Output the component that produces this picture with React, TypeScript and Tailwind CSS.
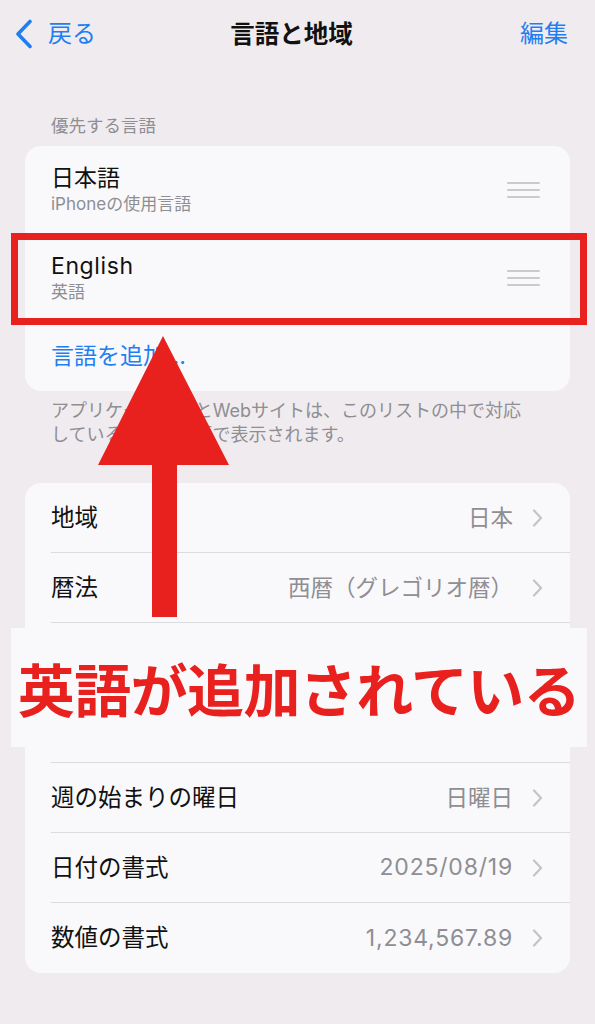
import React from "react";

const Chevron = () => (
  <svg width="11" height="18" viewBox="0 0 11 18" className="shrink-0">
    <path d="M2 1.5 L9 9 L2 16.5" fill="none" stroke="#c4c4c8" strokeWidth="2.2" strokeLinecap="round" strokeLinejoin="round" />
  </svg>
);

const Handle = () => (
  <svg width="33" height="16" viewBox="0 0 33 16" className="shrink-0">
    <rect x="0" y="0" width="33" height="2" rx="1" fill="#c9c9ce" />
    <rect x="0" y="7" width="33" height="2" rx="1" fill="#c9c9ce" />
    <rect x="0" y="14" width="33" height="2" rx="1" fill="#c9c9ce" />
  </svg>
);

const rows2: { label: string; value: string; latin?: boolean; hidden?: boolean }[] = [
  { label: "地域", value: "日本" },
  { label: "暦法", value: "西暦（グレゴリオ暦）" },
  { label: "", value: "", hidden: true },
  { label: "", value: "", hidden: true },
  { label: "週の始まりの曜日", value: "日曜日" },
  { label: "日付の書式", value: "2025/08/19", latin: true },
  { label: "数値の書式", value: "1,234,567.89", latin: true },
];

export default function App() {
  return (
    <div
      className="relative w-[595px] h-[1024px] overflow-hidden bg-[#f0ebee] text-[#111111]"
      style={{ fontFamily: '"Inter", "Noto Sans CJK JP", sans-serif' }}
    >
      {/* Nav bar */}
      <header className="h-[68px] grid grid-cols-[1fr_auto_1fr] items-center pl-[15px] pr-[27px]">
        <div className="flex items-center gap-[15px] text-[#1f7ff2]">
          <svg width="18" height="30" viewBox="0 0 18 30">
            <path d="M15 2.5 L3 15 L15 27.5" fill="none" stroke="#1f7ff2" strokeWidth="3.6" strokeLinecap="round" strokeLinejoin="round" />
          </svg>
          <span className="text-[24px] leading-[30px]">戻る</span>
        </div>
        <h1 className="text-[24.5px] leading-[30px] font-bold">言語と地域</h1>
        <div className="justify-self-end text-[24px] leading-[30px] text-[#1f7ff2]">編集</div>
      </header>

      {/* Section header */}
      <div className="mt-[47px] pl-[51px] text-[17.5px] leading-[22px] text-[#8e8e93]">優先する言語</div>

      {/* Card 1 */}
      <div className="mt-[9px] mx-[25px] rounded-[16px] bg-[#f9f9fb] overflow-hidden">
        <div className="pl-[26px]">
          <div className="h-[88px] flex items-center pr-[30px] border-b border-[#dcdce0]">
            <div className="flex-1 flex flex-col">
              <span className="text-[23px] leading-[28px]">日本語</span>
              <span className="text-[17px] leading-[24px] text-[#8e8e93]">iPhoneの使用言語</span>
            </div>
            <Handle />
          </div>
        </div>
        <div className="pl-[26px]">
          <div className="h-[88px] flex items-center pr-[30px] border-b border-[#dcdce0]">
            <div className="flex-1 flex flex-col">
              <span className="text-[23px] leading-[28px] tracking-[0.6px]">English</span>
              <span className="text-[17px] leading-[24px] text-[#8e8e93]">英語</span>
            </div>
            <Handle />
          </div>
        </div>
        <div className="h-[69px] flex items-center pl-[26px] text-[23px] text-[#1f7ff2]">言語を追加…</div>
      </div>

      {/* Footer */}
      <p className="mt-[8px] pl-[51px] text-[18px] leading-[24px] text-[#8e8e93]">
        アプリケーションとWebサイトは、このリストの中で対応
        <br />
        している最初の言語で表示されます。
      </p>

      {/* Card 2 */}
      <div className="mt-[36px] mx-[25px] rounded-[16px] bg-[#f9f9fb] overflow-hidden">
        {rows2.map((r, i) => (
          <div key={i} className="pl-[26px]">
            <div
              className={
                i < rows2.length - 1
                  ? "h-[70px] flex items-center pr-[27px] border-b border-[#dcdce0]"
                  : "h-[70px] flex items-center pr-[27px]"
              }
            >
              {!r.hidden && (
                <>
                  <span className="flex-1 text-[23.5px]">{r.label}</span>
                  <span
                    className={
                      r.latin
                        ? "text-[23px] tracking-[0.8px] text-[#8e8e93] mr-[19px]"
                        : "text-[22.5px] text-[#8e8e93] mr-[19px]"
                    }
                  >
                    {r.value}
                  </span>
                  <Chevron />
                </>
              )}
            </div>
          </div>
        ))}
      </div>

      {/* Red highlight rectangle */}
      <div className="absolute left-[11px] top-[233px] w-[576px] h-[92px] border-[7px] border-[#e8211f]" />

      {/* Red arrow */}
      <svg className="absolute left-[98px] top-[336px]" width="131" height="281" viewBox="0 0 131 281">
        <polygon points="65,0 131,129 79,129 79,281 54,281 54,129 0,129" fill="#e8211f" />
      </svg>

      {/* Annotation banner */}
      <div className="absolute left-[11px] top-[628px] w-[576px] h-[119px] bg-[#f9f9fb] flex items-center justify-center">
        <span
          className="text-[57px] leading-none font-bold tracking-[-0.6px] text-[#e8211f]"
          style={{ fontFamily: '"Noto Sans CJK JP", sans-serif' }}
        >
          英語が追加されている
        </span>
      </div>
    </div>
  );
}
